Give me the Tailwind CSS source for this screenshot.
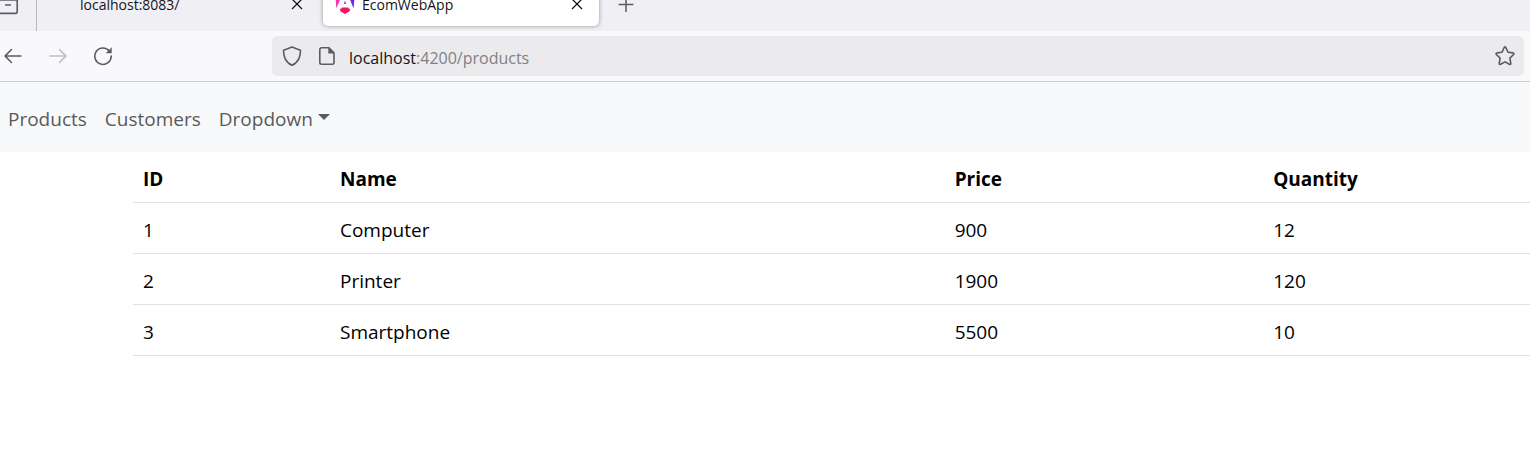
<!DOCTYPE html>
<html lang="en">
<head>
<meta charset="utf-8">
<meta name="viewport" content="width=device-width, initial-scale=1">
<title>EcomWebApp</title>
<script src="https://cdn.jsdelivr.net/npm/@tailwindcss/browser@4"></script>
</head>
<body class="min-h-screen overflow-x-hidden bg-white font-['Segoe_UI','Open_Sans','Noto_Sans',sans-serif] text-black">

<!-- Tab strip -->
<header class="flex h-[31px] items-end overflow-hidden bg-[#f0eff4] text-sm text-[#15141a]">
  <button aria-label="Recent tabs" class="flex h-12 w-9 shrink-0 items-center text-[#5b5b66]">
    <svg class="h-6 w-5" viewBox="0 0 20 24" fill="none" stroke="currentColor" stroke-width="1.6"><path d="M-2 5h19.200v11.400a2 2 0 0 1-2 2H-2M5 10h6"/></svg>
  </button>
  <span class="h-full w-px shrink-0 bg-[#b9b8bf]"></span>
  <div class="mb-[5px] flex h-[42px] w-[281px] shrink-0 items-center pr-[15px] pl-[43px]">
    <span class="grow leading-5">localhost:8083/</span>
    <button aria-label="Close tab"><svg class="size-3" viewBox="0 0 12 12" fill="none" stroke="currentColor" stroke-width="1.300"><path d="M1 0l10 10M11 0L1 10"/></svg></button>
  </div>
  <div class="mb-[5px] ml-[5px] flex h-[42px] w-[276px] shrink-0 items-center rounded-[5px] bg-white pr-4 pl-3 shadow-[0_0_4px_rgba(0,0,0,0.4)]">
    <svg class="mr-[7px] h-5 w-5 shrink-0" viewBox="0 0 20 20" aria-hidden="true">
      <defs><linearGradient id="ng" x1="0" x2="1" y1="0" y2="0"><stop offset="0.1" stop-color="#ff2fb4"/><stop offset="0.5" stop-color="#c92fe0"/><stop offset="0.9" stop-color="#6a25f5"/></linearGradient></defs>
      <path fill="url(#ng)" d="M12.600-1L19.500 2.500l-.9 11zM7.400-1L.5 2.500l.9 11zM10 5.500l1.300 3.600H8.700z"/>
      <path fill="#f5135d" d="M6.300 13.800l.5-1.200h6.400l.5 1.200H15.200l-.6 2.400L10 19l-4.600-2.800-.6-2.400z"/>
    </svg>
    <span class="grow leading-5">EcomWebApp</span>
    <button aria-label="Close tab"><svg class="size-3" viewBox="0 0 12 12" fill="none" stroke="currentColor" stroke-width="1.300"><path d="M1 0l10 10M11 0L1 10"/></svg></button>
  </div>
  <button aria-label="New tab" class="mb-[5px] ml-[19px] flex h-[42px] items-center text-[#5b5b66]"><svg class="size-4" viewBox="0 0 16 16" fill="none" stroke="currentColor" stroke-width="1.5"><path d="M8 0v15M0.500 7.500h15"/></svg></button>
</header>

<!-- Navigation toolbar -->
<div class="flex items-center border-b border-[#cccccf] bg-[#f9f9fb] py-[5px] pr-[6px] text-[#5b5b66]">
  <button aria-label="Back" class="ml-[3px]"><svg class="size-5" viewBox="0 0 20 20" fill="none" stroke="currentColor" stroke-width="1.6" stroke-linecap="round" stroke-linejoin="round"><path d="M18 10H2M8.500 3.500L2 10l6.500 6.500"/></svg></button>
  <button aria-label="Forward" disabled class="ml-[25px] text-[#bdbdc3]"><svg class="size-5" viewBox="0 0 20 20" fill="none" stroke="currentColor" stroke-width="1.6" stroke-linecap="round" stroke-linejoin="round"><path d="M2 10H18M11.500 3.500L18 10l-6.500 6.500"/></svg></button>
  <button aria-label="Reload" class="ml-[25px]"><svg class="size-5" viewBox="0 0 20 20" fill="none" stroke="currentColor" stroke-width="1.6" stroke-linecap="round"><path d="M16.500 5.200A8.200 8.200 0 1 0 18.200 10"/><path d="M18.700 1.300v5.900h-5.900z" fill="currentColor" stroke="none"/></svg></button>
  <div class="ml-[159px] flex h-10 grow items-center rounded-[5px] bg-[#ebebed] pr-[9px] pl-[10px]">
    <svg class="size-5 shrink-0" viewBox="0 0 20 20" fill="none" stroke="currentColor" stroke-width="1.6" stroke-linejoin="round" aria-hidden="true"><path d="M10 1L18.400 4.300c.4 5.500-1.900 12.200-8.400 15-6.500-2.800-8.800-9.500-8.400-15z"/></svg>
    <svg class="ml-[15px] size-5 shrink-0" viewBox="0 0 20 20" fill="none" stroke="currentColor" stroke-width="1.6" stroke-linejoin="round" aria-hidden="true"><path d="M4.500 1.800h7.500L17 6.800V16.500a1.700 1.700 0 0 1-1.700 1.700H4.500a1.700 1.700 0 0 1-1.700-1.700V3.500a1.700 1.700 0 0 1 1.700-1.700z"/><path d="M11.300 1.200l6.300 6.300h-6.300z" fill="currentColor" stroke="none"/></svg>
    <label for="url" class="ml-3 pt-1 text-base leading-6 text-[#15141a]">localhost</label>
    <input id="url" type="text" value=":4200/products" class="min-w-0 grow bg-transparent pt-1 text-base leading-6 text-[#808084] outline-none">
    <button aria-label="Bookmark this page"><svg class="size-5" viewBox="0 0 20 20" fill="none" stroke="#5b5b5e" stroke-width="1.6" stroke-linejoin="round"><path d="M9.200 1.500q.8-1.200 1.600 0l2.200 4.700 5.100.7q1.500.4.500 1.600l-3.700 3.600.9 5.200q0 1.500-1.400 1L10 15.900l-4.400 2.400q-1.400.5-1.400-1l.9-5.200L1.400 8.500q-1-1.200.5-1.600L7 6.200z"/></svg></button>
  </div>
</div>

<!-- Site navigation -->
<nav class="flex gap-[18px] bg-[#f8f9fb] px-2 pt-[22px] pb-[18px] text-[19px] leading-[30px] text-[#595a5b]">
  <a href="#products">Products</a>
  <a href="#customers">Customers</a>
  <button class="flex items-center gap-[5px]">Dropdown<svg class="mb-1 h-[6px] w-3" viewBox="0 0 12 6" fill="currentColor" aria-hidden="true"><path d="M0 0h12L6 6z"/></svg></button>
</nav>

<!-- Products table -->
<main class="ml-[133px]">
  <table class="w-full table-fixed border-collapse text-left text-[19px] leading-[30px]">
    <colgroup><col class="w-[14.1%]"><col class="w-[44%]"><col class="w-[22.8%]"><col></colgroup>
    <thead>
      <tr class="border-b border-[#dee2e6] *:px-[10px] *:pt-3 *:pb-2 *:font-bold"><th scope="col">ID</th><th scope="col">Name</th><th scope="col">Price</th><th scope="col">Quantity</th></tr>
    </thead>
    <tbody class="*:border-b *:border-[#dee2e6] [&_td]:px-[10px] [&_td]:pt-3 [&_td]:pb-2">
      <tr><td>1</td><td>Computer</td><td>900</td><td>12</td></tr>
      <tr><td>2</td><td>Printer</td><td>1900</td><td>120</td></tr>
      <tr><td>3</td><td>Smartphone</td><td>5500</td><td>10</td></tr>
    </tbody>
  </table>
</main>
</body>
</html>
